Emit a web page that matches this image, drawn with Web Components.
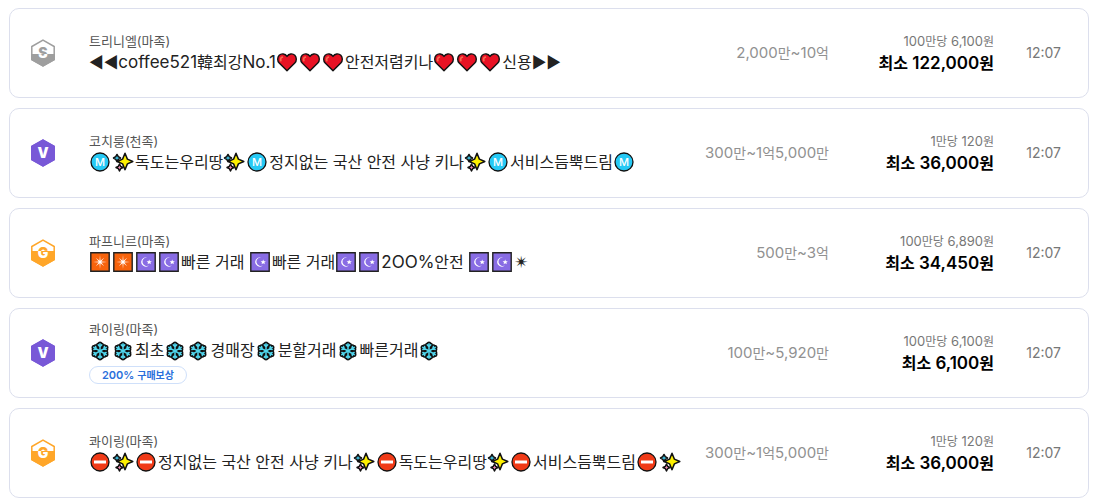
<!DOCTYPE html>
<html lang="ko">
<head>
<meta charset="utf-8">
<meta name="viewport" content="width=device-width, initial-scale=1">
<title>거래 목록</title>
<style>
    body {
        margin: 0;
        padding: 8px 6px 6px 9px;
        background: #fff;
        color: #222;
        font-family: Inter, "Noto Sans CJK KR", "DejaVu Sans", sans-serif;
    }

    /* Latin letters and digits run one pixel larger than Hangul */
    .latin {
        font-size: 17px;
    }

    .symbol {
        font-family: "DejaVu Sans", sans-serif;
        font-size: 17px;
    }
</style>
</head>
<body>

<trade-list>
    <trade-row grade="silver" amount="2,000만~10억" unit="100만당 6,100원" price="최소 122,000원" time="12:07">
        <span slot="server">트리니엘(마족)</span>
        ◀◀<span class="latin">coffee521</span>韓최강<span class="latin">No.1</span><trade-emoji name="heart"></trade-emoji><trade-emoji name="heart"></trade-emoji><trade-emoji name="heart"></trade-emoji>안전저렴키나<trade-emoji name="heart"></trade-emoji><trade-emoji name="heart"></trade-emoji><trade-emoji name="heart"></trade-emoji>신용▶▶
    </trade-row>

    <trade-row grade="vip" amount="300만~1억5,000만" unit="1만당 120원" price="최소 36,000원" time="12:07">
        <span slot="server">코치룽(천족)</span>
        <trade-emoji name="metro"></trade-emoji><trade-emoji name="sparkles"></trade-emoji>독도는우리땅<trade-emoji name="sparkles"></trade-emoji><trade-emoji name="metro"></trade-emoji>정지없는 국산 안전 사냥 키나<trade-emoji name="sparkles"></trade-emoji><trade-emoji name="metro"></trade-emoji>서비스듬뿍드림<trade-emoji name="metro"></trade-emoji>
    </trade-row>

    <trade-row grade="gold" amount="500만~3억" unit="100만당 6,890원" price="최소 34,450원" time="12:07">
        <span slot="server">파프니르(마족)</span>
        <trade-emoji name="burst"></trade-emoji><trade-emoji name="burst"></trade-emoji><trade-emoji name="moon"></trade-emoji><trade-emoji name="moon"></trade-emoji>빠른 거래 <trade-emoji name="moon"></trade-emoji>빠른 거래<trade-emoji name="moon"></trade-emoji><trade-emoji name="moon"></trade-emoji><span class="latin">2OO%</span>안전 <trade-emoji name="moon"></trade-emoji><trade-emoji name="moon"></trade-emoji><span class="symbol">✴&#xFE0E;</span>
    </trade-row>

    <trade-row grade="vip" amount="100만~5,920만" unit="100만당 6,100원" price="최소 6,100원" time="12:07">
        <span slot="server">콰이링(마족)</span>
        <trade-emoji name="snow"></trade-emoji><trade-emoji name="snow"></trade-emoji>최초<trade-emoji name="snow"></trade-emoji><trade-emoji name="snow"></trade-emoji>경매장<trade-emoji name="snow"></trade-emoji>분할거래<trade-emoji name="snow"></trade-emoji>빠른거래<trade-emoji name="snow"></trade-emoji>
        <trade-tag slot="tag" label="200% 구매보상"></trade-tag>
    </trade-row>

    <trade-row grade="gold" amount="300만~1억5,000만" unit="1만당 120원" price="최소 36,000원" time="12:07">
        <span slot="server">콰이링(마족)</span>
        <trade-emoji name="stop"></trade-emoji><trade-emoji name="sparkles"></trade-emoji><trade-emoji name="stop"></trade-emoji>정지없는 국산 안전 사냥 키나<trade-emoji name="sparkles"></trade-emoji><trade-emoji name="stop"></trade-emoji>독도는우리땅<trade-emoji name="sparkles"></trade-emoji><trade-emoji name="stop"></trade-emoji>서비스듬뿍드림<trade-emoji name="stop"></trade-emoji><trade-emoji name="sparkles"></trade-emoji>
    </trade-row>
</trade-list>

<script>
const FLAKE_ARM = 'M11 10V2.800M9.300 3.900 11 5.600l1.700-1.700';
const FLAKE = [0, 60, 120, 180, 240, 300]
    .map(angle => `<path d="${FLAKE_ARM}" transform="rotate(${angle} 11 10)"/>`)
    .join('');

// Small pictographs that sit inside a title line
const EMOJI = {
    heart: `<path d="M11 18.800 3.200 11C1.200 9 1.200 5.300 3.200 3.300c2.200-2.200 6-1.800 7.800 1.100 1.800-2.900 5.600-3.300 7.800-1.100 2 2 2 5.700 0 7.700Z" fill="#e81224" stroke="#111" stroke-width="1.400" stroke-linejoin="round"/>
        <path d="M4.800 8.600c-.6-1.500.1-3 1.500-3.400" fill="none" stroke="#f4694f" stroke-width="1.800" stroke-linecap="round"/>`,
    metro: `<circle cx="11" cy="10" r="9" fill="#26c9f5" stroke="#111" stroke-width="1.300"/>
        <text x="11" y="14" font-family="Inter, sans-serif" font-size="11" font-weight="500" text-anchor="middle" fill="#fff">M</text>`,
    stop: `<circle cx="11" cy="10" r="9" fill="#f03a17" stroke="#111" stroke-width="1.300"/>
        <path d="M5 8.500h12v3H5Z" fill="#fff"/>`,
    sparkles: `<g stroke="#111" stroke-width="1.500" stroke-linejoin="round">
        <path d="m5 2.500 1.300 2.200L8.500 6 6.300 7.300 5 9.500 3.700 7.300 1.500 6l2.200-1.300Z" fill="#3fbfe0"/>
        <path d="m7.500 12 1.200 2.300L11 15.500l-2.300 1.200L7.500 19l-1.200-2.300L4 15.500l2.300-1.200Z" fill="#f08bb4"/>
        <path d="m13 1.200 2.400 5.900 5.400 2.400-5.400 2.400L13 17.800l-2.400-5.900-5.400-2.400 5.400-2.400Z" fill="#fff100"/></g>`,
    burst: `<path d="M1.800 .8h18.400v18.400H1.800Z" fill="#f7630c" stroke="#222" stroke-width="1.400"/>
        <path d="m11 3 .5 5.700 3.700-2.900-2.900 3.700 5.700.5-5.700.5 2.900 3.700-3.700-2.900L11 17l-.5-5.700-3.700 2.900 2.900-3.700L4 10l5.700-.5-2.900-3.700 3.700 2.900Z" fill="#fff"/>`,
    moon: `<path d="M1.800 .8h18.400v18.400H1.800Z" fill="#886ce4" stroke="#222" stroke-width="1.400"/>
        <path d="M12.500 5.600a4.600 4.600 0 1 0 1.800 7.400 4.200 4.200 0 1 1-1.800-7.400Z" fill="#fff"/>
        <path d="m14.200 7.500.7 1.700 1.900.1-1.400 1.200.4 1.800-1.600-1-1.600 1 .4-1.800-1.400-1.200 1.900-.1Z" fill="#fff"/>`,
    snow: `<g fill="none" stroke="#111" stroke-width="4.600" stroke-linecap="round" stroke-linejoin="round">${FLAKE}</g>
        <g fill="none" stroke="#50d5ec" stroke-width="1.500" stroke-linecap="round">${FLAKE}</g>`
};

// Member grades: badge letter, colour and the height where the filled part starts
const GRADES = {
    silver: { letter: 'S', color: '#9e9e9e', fillFrom: 15 },
    gold: { letter: 'G', color: '#ffa629', fillFrom: 12 },
    vip: { letter: 'V', color: '#7858d7', fillFrom: 0 }
};

// Wraps Hangul runs so that they can be sized apart from the digits
function wrapHangul(text) {
    return text.replace(/[가-힣]+/g, '<span class="ko">$&</span>');
}

class TradeEmoji extends HTMLElement {
    connectedCallback() {
        if (this.shadowRoot) return;
        this.attachShadow({ mode: 'open' });
        this.shadowRoot.innerHTML = `
            <style>
                :host {
                    display: inline-block;
                    vertical-align: middle;
                    width: 23px;
                    height: 22px;
                }

                svg {
                    display: block;
                }
            </style>
            <svg width="23" height="22" viewBox="0 0 23 22" aria-hidden="true">${EMOJI[this.getAttribute('name')]}</svg>
        `;
    }
}

class GradeBadge extends HTMLElement {
    connectedCallback() {
        if (this.shadowRoot) return;
        const { letter, color, fillFrom } = GRADES[this.getAttribute('grade')];

        this.attachShadow({ mode: 'open' });
        this.shadowRoot.innerHTML = `
            <style>
                :host {
                    display: block;
                }

                svg {
                    display: block;
                }

                text {
                    font: 900 14px Inter, sans-serif;
                    text-anchor: middle;
                }
            </style>
            <svg width="26" height="28" viewBox="0 0 26 28" aria-hidden="true">
                <defs>
                    <clipPath id="filled"><rect y="${fillFrom}" width="26" height="28"/></clipPath>
                    <linearGradient id="split" gradientUnits="userSpaceOnUse" x1="0" y1="0" x2="0" y2="28">
                        <stop offset="${fillFrom / 28}" stop-color="${color}"/>
                        <stop offset="${fillFrom / 28}" stop-color="#fff"/>
                    </linearGradient>
                </defs>
                <path d="M13 1.200 24.200 7.500v13L13 26.800 1.800 20.500v-13Z" fill="#fff" stroke="${color}" stroke-width="1.500"/>
                <path d="M13 .3 25 7v14l-12 6.700L1 21V7Z" fill="${color}" clip-path="url(#filled)"/>
                <text x="13" y="19" fill="url(#split)">${letter}</text>
            </svg>
        `;
    }
}

class TradeTag extends HTMLElement {
    connectedCallback() {
        if (this.shadowRoot) return;
        this.attachShadow({ mode: 'open' });
        this.shadowRoot.innerHTML = `
            <style>
                :host {
                    display: inline-block;
                    box-sizing: border-box;
                    height: 18px;
                    padding: 0 12px;
                    border: 1px solid #cfe0fa;
                    border-radius: 9px;
                    color: #2a6fdb;
                    font-size: 11px;
                    font-weight: 600;
                    line-height: 16px;
                }

                .ko {
                    font-size: 10px;
                    line-height: 1;
                }
            </style>
            ${wrapHangul(this.getAttribute('label'))}
        `;
    }
}

class TradeRow extends HTMLElement {
    connectedCallback() {
        if (this.shadowRoot) return;
        this.attachShadow({ mode: 'open' });
        this.render();
    }

    render() {
        this.shadowRoot.innerHTML = `
            <style>
                :host {
                    display: grid;
                    grid-template-columns: 26px minmax(0, 1fr) auto 165px 67px;
                    align-items: center;
                    box-sizing: border-box;
                    min-height: 90px;
                    padding: 0 27px 0 20px;
                    border: 1px solid #dcdfed;
                    border-radius: 10px;
                    background: #fff;
                }

                .info {
                    display: flex;
                    flex-direction: column;
                    align-items: flex-start;
                    padding-left: 33px;
                    white-space: nowrap;
                }

                .server {
                    color: #555;
                    font-size: 13px;
                    line-height: 18px;
                }

                .title {
                    color: #222;
                    font-size: 16px;
                    line-height: 24px;
                    text-decoration: none;
                }

                ::slotted([slot="tag"]) {
                    margin: 3px 0 2px;
                }

                .ko {
                    line-height: 1;
                }

                .amount {
                    color: #919191;
                    font-size: 15px;
                    line-height: 20px;
                    white-space: nowrap;
                }

                .amount .ko {
                    font-size: 14px;
                }

                .price {
                    text-align: right;
                }

                .unit {
                    color: #777;
                    font-size: 13px;
                    line-height: 20px;
                }

                .unit .ko {
                    font-size: 12px;
                }

                .total {
                    color: #000;
                    font-size: 17px;
                    font-weight: 600;
                    line-height: 24px;
                }

                .total .ko {
                    font-size: 16px;
                }

                time {
                    color: #777;
                    font-size: 14px;
                    line-height: 20px;
                    text-align: right;
                }
            </style>
            <grade-badge grade="${this.getAttribute('grade')}"></grade-badge>
            <div class="info">
                <div class="server"><slot name="server"></slot></div>
                <a class="title" href="#"><slot></slot></a>
                <slot name="tag"></slot>
            </div>
            <div class="amount">${wrapHangul(this.getAttribute('amount'))}</div>
            <div class="price">
                <div class="unit">${wrapHangul(this.getAttribute('unit'))}</div>
                <div class="total">${wrapHangul(this.getAttribute('price'))}</div>
            </div>
            <time>${this.getAttribute('time')}</time>
        `;
    }
}

class TradeList extends HTMLElement {
    connectedCallback() {
        if (this.shadowRoot) return;
        this.attachShadow({ mode: 'open' });
        this.shadowRoot.innerHTML = `
            <style>
                :host {
                    display: flex;
                    flex-direction: column;
                    gap: 10px;
                }
            </style>
            <slot></slot>
        `;
    }
}

customElements.define('trade-emoji', TradeEmoji);
customElements.define('grade-badge', GradeBadge);
customElements.define('trade-tag', TradeTag);
customElements.define('trade-row', TradeRow);
customElements.define('trade-list', TradeList);
</script>
</body>
</html>
